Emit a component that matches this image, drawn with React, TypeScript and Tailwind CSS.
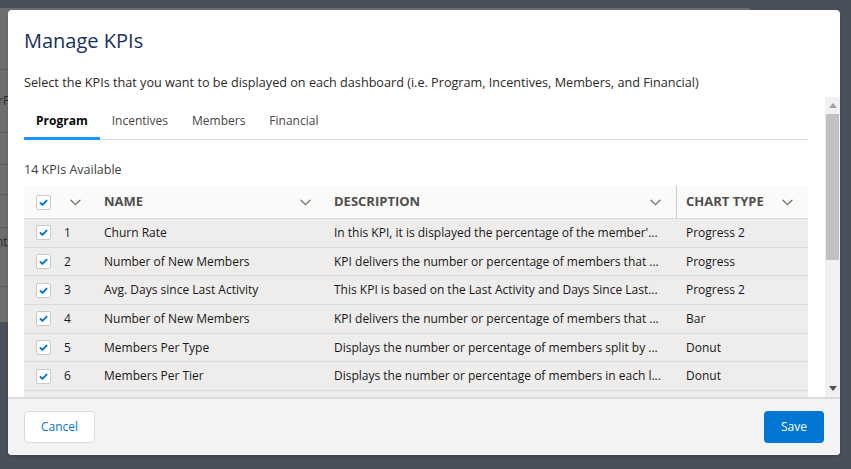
import React from "react";

const font = { fontFamily: '"Open Sans", "Noto Sans", sans-serif' };

type Kpi = { id: number; name: string; description: string; chart: string };

const kpis: Kpi[] = [
  { id: 1, name: "Churn Rate", description: "In this KPI, it is displayed the percentage of the member'...", chart: "Progress 2" },
  { id: 2, name: "Number of New Members", description: "KPI delivers the number or percentage of members that ...", chart: "Progress" },
  { id: 3, name: "Avg. Days since Last Activity", description: "This KPI is based on the Last Activity and Days Since Last...", chart: "Progress 2" },
  { id: 4, name: "Number of New Members", description: "KPI delivers the number or percentage of members that ...", chart: "Bar" },
  { id: 5, name: "Members Per Type", description: "Displays the number or percentage of members split by ...", chart: "Donut" },
  { id: 6, name: "Members Per Tier", description: "Displays the number or percentage of members in each l...", chart: "Donut" },
  { id: 7, name: "Members Per Status", description: "Displays the number or percentage of members in each s...", chart: "Donut" },
];

function Chevron() {
  return (
    <svg width="11" height="7" viewBox="0 0 11 7" fill="none">
      <path d="M1 1.2 L5.5 5.6 L10 1.2" stroke="#706e6b" strokeWidth="1.3" strokeLinecap="round" strokeLinejoin="round" />
    </svg>
  );
}

function Checkbox() {
  return (
    <div className="flex h-[15px] w-[15px] items-center justify-center rounded-[2px] border border-[#c9c9c9] bg-white">
      <svg width="11" height="11" viewBox="0 0 11 11" fill="none">
        <path d="M2.5 6 L4.5 7.9 L8.6 3.6" stroke="#0176d3" strokeWidth="1.9" strokeLinecap="round" strokeLinejoin="round" />
      </svg>
    </div>
  );
}

const cols = "grid grid-cols-[36px_36px_230px_351px_1fr]";

function Tabs() {
  const tabs = ["Program", "Incentives", "Members", "Financial"];
  return (
    <div className="flex border-b border-[#dddbda] pt-[4px]">
      {tabs.map((t, i) => (
        <div
          key={t}
          className={
            i === 0
              ? "-mb-px flex h-[39px] items-center border-b-[3px] border-[#1b96ff] px-3 pt-[3px] text-[12px] font-bold text-[#080707]"
              : "-mb-px flex h-[39px] items-center border-b-[3px] border-transparent px-3 pt-[3px] text-[12px] text-[#444444]"
          }
        >
          {t}
        </div>
      ))}
    </div>
  );
}

function KpiTable() {
  return (
    <div className="text-[12px] text-[#181818]">
      <div className={`${cols} h-[33px] items-center border-b border-[#dddbda] bg-[#fafaf9] text-[13px] font-bold text-[#514f4d]`}>
        <div className="flex justify-center pl-[2px]">
          <Checkbox />
        </div>
        <div className="flex pl-[10px]">
          <Chevron />
        </div>
        <div className="flex items-center justify-between pl-[8px] pr-[15px]">
          <span>NAME</span>
          <Chevron />
        </div>
        <div className="flex h-full items-center justify-between border-r border-[#c9c9c9] pl-[8px] pr-[15px]">
          <span>DESCRIPTION</span>
          <Chevron />
        </div>
        <div className="flex items-center justify-between pl-[9px] pr-[15px]">
          <span>CHART TYPE</span>
          <Chevron />
        </div>
      </div>
      {kpis.map((k) => (
        <div key={k.id} className={`${cols} h-[28.7px] items-center border-b border-[#dddbda] bg-[#eeedec]`}>
          <div className="flex justify-center pl-[2px]">
            <Checkbox />
          </div>
          <div className="pl-[4px]">{k.id}</div>
          <div className="overflow-hidden whitespace-nowrap pl-[8px]">{k.name}</div>
          <div className="overflow-hidden whitespace-nowrap pl-[8px]">{k.description}</div>
          <div className="pl-[9px]">{k.chart}</div>
        </div>
      ))}
    </div>
  );
}

function Scrollbar() {
  return (
    <div className="flex w-[15px] shrink-0 flex-col items-center bg-[#f1f1f1]">
      <div className="flex h-[17px] w-full items-center justify-center">
        <svg width="8" height="5" viewBox="0 0 8 5">
          <path d="M0 5 L4 0 L8 5 Z" fill="#a3a3a3" />
        </svg>
      </div>
      <div className="h-[146px] w-[13px] bg-[#c1c1c1]" />
      <div className="flex-1" />
      <div className="flex h-[17px] w-full items-center justify-center">
        <svg width="8" height="5" viewBox="0 0 8 5">
          <path d="M0 0 L8 0 L4 5 Z" fill="#505050" />
        </svg>
      </div>
    </div>
  );
}

function BackgroundPage() {
  const lines = [62, 63, 32, 30, 33, 19, 40];
  return (
    <div className="mt-[8px] flex h-[314px] w-[750px] flex-col bg-[#6e6e6e] text-[12px] text-[#2a2a2a]">
      {lines.map((h, i) => (
        <div key={i} style={{ height: h }} className="flex items-center border-b border-[#5c5c5c]">
          {i === 1 ? <span className="-ml-[2px]">rP</span> : null}
          {i === 5 ? <span className="-ml-[4px] mt-[10px]">nt</span> : null}
        </div>
      ))}
    </div>
  );
}

export default function App() {
  return (
    <div style={font} className="relative h-[469px] w-[851px] overflow-hidden bg-[#4a505b]">
      <BackgroundPage />

      {/* modal dialog */}
      <div className="absolute left-[8px] top-[10px] flex h-[445px] w-[832px] flex-col overflow-hidden rounded-[4px] bg-white shadow-[0_2px_3px_rgba(0,0,0,0.16)]">
        <div className="px-[16px] pb-[6px] pt-[16px]">
          <h2 className="text-[20px] leading-[30px] text-[#16325c]">Manage KPIs</h2>
          <p className="mt-[17px] text-[12.65px] leading-[18px] text-[#2b2826]">
            Select the KPIs that you want to be displayed on each dashboard (i.e. Program, Incentives, Members, and Financial)
          </p>
        </div>

        <div className="flex min-h-0 flex-1">
          <div className="min-w-0 flex-1 overflow-hidden pl-[16px] pr-[17px]">
            <Tabs />
            <div className="mt-[22px] text-[12.5px] leading-[16px] text-[#3e3e3c]">14 KPIs Available</div>
            <div className="mt-[8px]">
              <KpiTable />
            </div>
          </div>
          <Scrollbar />
        </div>

        <div className="flex items-center justify-between border-t-2 border-[#dddbda] bg-[#f3f3f3] px-[16px] py-[12px]">
          <button className="h-[32px] rounded-[4px] border border-[#dddbda] bg-white px-[16px] text-[12px] text-[#0176d3]">
            Cancel
          </button>
          <button className="h-[32px] rounded-[4px] bg-[#0176d3] px-[17px] text-[12px] text-white">Save</button>
        </div>
      </div>
    </div>
  );
}
